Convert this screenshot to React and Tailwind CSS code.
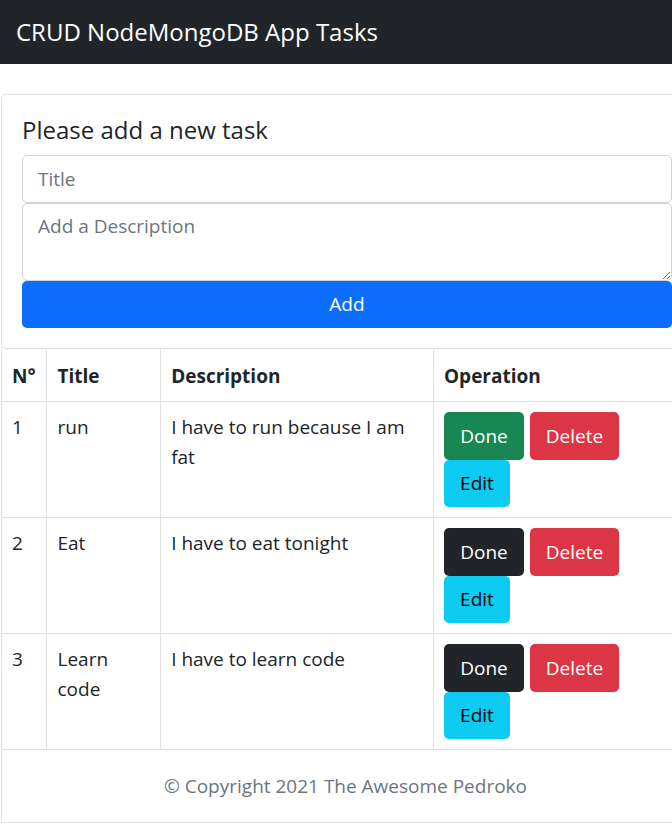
import React from 'react'

const TASKS = [
  { id: 1, title: 'run', desc: 'I have to run because I am fat', done: false },
  { id: 2, title: 'Eat', desc: 'I have to eat tonight', done: true },
  { id: 3, title: 'Learn code', desc: 'I have to learn code', done: true },
]

export default function App() {
  return (
    <div
      className="w-[672px] h-[824px] overflow-hidden bg-white text-[#212529]"
      style={{ fontFamily: '"Open Sans", "Noto Sans", sans-serif' }}
    >
      {/* Navbar */}
      <nav className="h-16 bg-[#212529] flex items-center px-4">
        <span className="text-white text-[24px] leading-[30px]">CRUD NodeMongoDB App Tasks</span>
      </nav>

      <div className="w-[692px] ml-px mt-[30px]">
        {/* Form card */}
        <div className="border border-[#dfdfdf] rounded-[5px] p-5">
          <h5 className="text-[24px] leading-[30px] font-medium mb-2.5">Please add a new task</h5>
          <input
            className="block w-full h-[47.5px] border border-[#ced4da] rounded-[5px] px-[15px] text-[19px] outline-none placeholder:text-[#6c757d]"
            placeholder="Title"
          />
          <textarea
            className="block w-full h-[78px] border border-[#ced4da] rounded-[5px] px-[15px] py-[7px] text-[19px] leading-[30px] outline-none resize-y placeholder:text-[#6c757d]"
            placeholder="Add a Description"
          />
          <button className="block w-full h-[47.5px] bg-[#0d6efd] text-white rounded-[5px] text-[19px]">
            Add
          </button>
        </div>

        {/* Tasks table + footer */}
        <div className="border-l border-b border-[#dee2e6]">
          <table className="w-full border-collapse text-[19px] leading-[30px]">
            <thead>
              <tr className="border-b border-[#dee2e6] text-left">
                <th className="w-[45px] px-2.5 pt-3 pb-2.5 font-bold border-r border-[#dee2e6]">N°</th>
                <th className="w-[114px] px-2.5 pt-3 pb-2.5 font-bold border-r border-[#dee2e6]">Title</th>
                <th className="w-[274px] px-2.5 pt-3 pb-2.5 font-bold border-r border-[#dee2e6]">Description</th>
                <th className="px-2.5 pt-3 pb-2.5 font-bold">Operation</th>
              </tr>
            </thead>
            <tbody>
              {TASKS.map(t => (
                <tr key={t.id} className="border-b border-[#dee2e6] align-top">
                  <td className="p-2.5 border-r border-[#dee2e6]">{t.id}</td>
                  <td className="p-2.5 border-r border-[#dee2e6]">{t.title}</td>
                  <td className="p-2.5 border-r border-[#dee2e6]">{t.desc}</td>
                  <td className="p-2.5">
                    <div className="flex flex-wrap gap-x-[6px] w-[239px]">
                      <button
                        className={`w-[80px] h-[47.5px] rounded-[5px] text-white ${t.done ? 'bg-[#212529]' : 'bg-[#198754]'}`}
                      >
                        Done
                      </button>
                      <button className="w-[89px] h-[47.5px] rounded-[5px] text-white bg-[#dc3545]">Delete</button>
                      <button className="w-[66px] h-[47.5px] rounded-[5px] text-black bg-[#0dcaf0]">Edit</button>
                    </div>
                  </td>
                </tr>
              ))}
            </tbody>
          </table>
          <footer className="h-[72px] flex items-center justify-center text-[19px] text-[#6c757d] pr-[4px]">
            © Copyright 2021 The Awesome Pedroko
          </footer>
        </div>
      </div>
    </div>
  )
}
